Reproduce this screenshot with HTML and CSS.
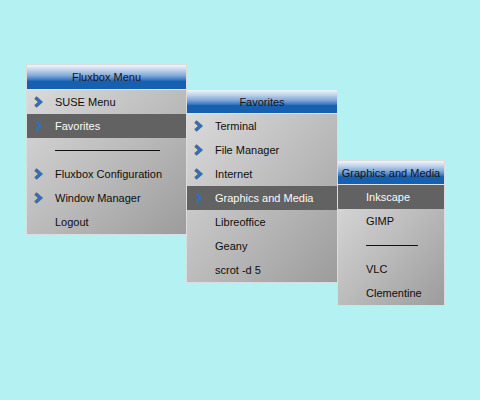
FILE: index.html
```html
<!DOCTYPE html>
<html>
<head>
<meta charset="utf-8">
<link rel="stylesheet" href="styles.css">
</head>
<body>
<div class="desktop">
  <div class="menu menu--main">
    <div class="title">Fluxbox Menu</div>
    <ul class="items">
      <li class="item sub"><svg class="arrow" viewBox="0 0 9 12"><polyline class="shade" points="2,1.5 7,6 2,10.5"/><polyline class="blue" points="2,1.5 7,6 2,10.5"/></svg>SUSE Menu</li>
      <li class="item sub active"><svg class="arrow" viewBox="0 0 9 12"><polyline class="blue" points="2.5,1.5 6.5,6 2.5,10.5"/></svg>Favorites</li>
      <li class="item sep"><span class="line"></span></li>
      <li class="item sub"><svg class="arrow" viewBox="0 0 9 12"><polyline class="shade" points="2,1.5 7,6 2,10.5"/><polyline class="blue" points="2,1.5 7,6 2,10.5"/></svg>Fluxbox Configuration</li>
      <li class="item sub"><svg class="arrow" viewBox="0 0 9 12"><polyline class="shade" points="2,1.5 7,6 2,10.5"/><polyline class="blue" points="2,1.5 7,6 2,10.5"/></svg>Window Manager</li>
      <li class="item">Logout</li>
    </ul>
  </div>

  <div class="menu menu--fav">
    <div class="title">Favorites</div>
    <ul class="items">
      <li class="item sub"><svg class="arrow" viewBox="0 0 9 12"><polyline class="shade" points="2,1.5 7,6 2,10.5"/><polyline class="blue" points="2,1.5 7,6 2,10.5"/></svg>Terminal</li>
      <li class="item sub"><svg class="arrow" viewBox="0 0 9 12"><polyline class="shade" points="2,1.5 7,6 2,10.5"/><polyline class="blue" points="2,1.5 7,6 2,10.5"/></svg>File Manager</li>
      <li class="item sub"><svg class="arrow" viewBox="0 0 9 12"><polyline class="shade" points="2,1.5 7,6 2,10.5"/><polyline class="blue" points="2,1.5 7,6 2,10.5"/></svg>Internet</li>
      <li class="item sub active"><svg class="arrow" viewBox="0 0 9 12"><polyline class="blue" points="2.5,1.5 6.5,6 2.5,10.5"/></svg>Graphics and Media</li>
      <li class="item">Libreoffice</li>
      <li class="item">Geany</li>
      <li class="item">scrot -d 5</li>
    </ul>
  </div>

  <div class="menu menu--gfx">
    <div class="title">Graphics and Media</div>
    <ul class="items">
      <li class="item active">Inkscape</li>
      <li class="item">GIMP</li>
      <li class="item sep"><span class="line"></span></li>
      <li class="item">VLC</li>
      <li class="item">Clementine</li>
    </ul>
  </div>
</div>
</body>
</html>
```

FILE: styles.css
```css
html, body {
  margin: 0;
  padding: 0;
}

body {
  background: #b3f1f2;
  font-family: "Liberation Sans", Arial, sans-serif;
  font-size: 11px;
  color: #111;
}

.desktop {
  position: relative;
  width: 480px;
  height: 400px;
  overflow: hidden;
}

.menu {
  position: absolute;
  box-sizing: border-box;
  border: 1px solid #dcdcdc;
  background: #dcdcdc;
  display: flex;
  flex-direction: column;
}

.menu--main {
  left: 26px;
  top: 64px;
  width: 161px;
}

.menu--fav {
  left: 186px;
  top: 89px;
  width: 152px;
}

.menu--gfx {
  left: 337px;
  top: 160px;
  width: 108px;
}

.title {
  height: 24px;
  border-bottom: 1px solid #dde3ea;
  background: linear-gradient(to bottom, #f2f5fa 0%, #c3d5ec 20%, #7fa7d8 45%, #3a78c2 62%, #1660af 68%, #1660af 100%);
  display: flex;
  align-items: center;
  justify-content: center;
  box-sizing: border-box;
  color: #141414;
  white-space: nowrap;
}

.menu--main .title {
  height: 25px;
}

.items {
  list-style: none;
  margin: 0;
  padding: 0;
  background: linear-gradient(to bottom right, #dadada 0%, #bcbcbc 50%, #9c9c9c 100%);
}

.item {
  position: relative;
  height: 24px;
  display: flex;
  align-items: center;
  padding-left: 28px;
  white-space: nowrap;
  color: #0e0e0e;
}

.item.active {
  background: #626262;
  color: #fafafa;
}

.arrow {
  position: absolute;
  left: 7px;
  top: 6px;
  width: 9px;
  height: 12px;
}

.arrow polyline {
  fill: none;
  stroke-linecap: butt;
  stroke-linejoin: miter;
}

.arrow .shade {
  stroke: #5a6470;
  stroke-width: 3.6;
  transform: translate(-0.6px, 0);
}

.arrow .blue {
  stroke: #2a72cc;
  stroke-width: 2.2;
}

.sep .line {
  display: block;
  height: 1px;
  background: #111;
  flex: 1;
  margin-right: 26px;
}
```
